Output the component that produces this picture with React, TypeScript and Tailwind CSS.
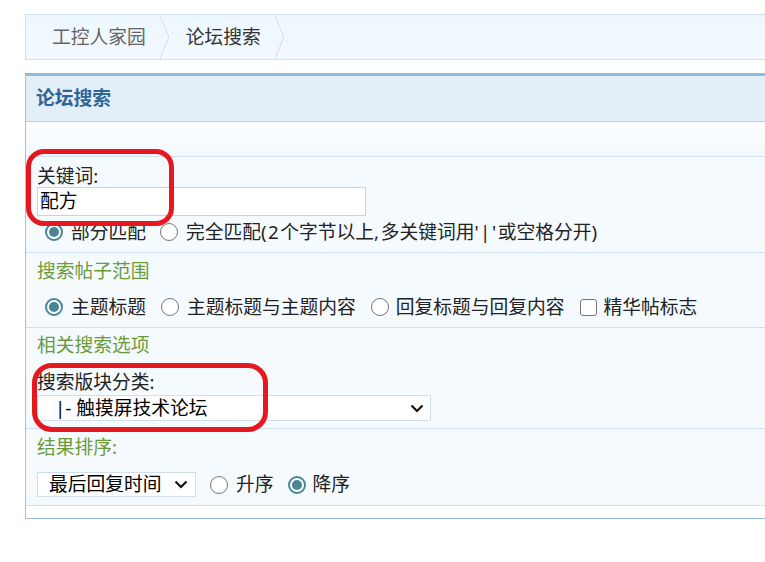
import React from "react";

function Crumb() {
  return (
    <svg width="12" height="44" viewBox="0 0 12 44" className="shrink-0">
      <path d="M1 0 L10 22 L1 44" fill="none" stroke="#d2dadf" strokeWidth="1" />
      <path d="M2.2 0 L11.2 22 L2.2 44" fill="none" stroke="#ffffff" strokeWidth="1" opacity="0.7" />
    </svg>
  );
}

function Chevron() {
  return (
    <svg width="14" height="9" viewBox="0 0 14 9" className="shrink-0">
      <path d="M1.5 1.5 L7 7 L12.5 1.5" fill="none" stroke="#111" strokeWidth="2.2" />
    </svg>
  );
}

function Radio({ checked, ml }: { checked?: boolean; ml: string }) {
  if (checked) {
    return (
      <span
        className={`w-[18px] h-[18px] shrink-0 rounded-full border-[2px] border-[#4a8594] bg-white flex items-center justify-center ${ml}`}
      >
        <span className="w-[10px] h-[10px] rounded-full bg-[#4a8594]" />
      </span>
    );
  }
  return (
    <span
      className={`w-[18px] h-[18px] shrink-0 rounded-full border-[1.5px] border-[#767676] bg-white ${ml}`}
    />
  );
}

const L = "tracking-[1.5px]";

export default function App() {
  return (
    <div className="relative w-[765px] h-[562px] overflow-hidden bg-white text-[#222] text-[18.75px] font-['Noto_Sans','Noto_Sans_CJK_SC',sans-serif]">
      <div className="pt-[14px] pl-[25px]">
        {/* breadcrumb */}
        <div className="w-[780px] h-[46px] border border-[#cfe2ee] bg-gradient-to-b from-[#ecf7fd] to-[#f3f9fd] flex items-center">
          <span className="pl-[26px] pr-[13px] text-[#666] leading-none">工控人家园</span>
          <Crumb />
          <span className="pl-[15px] pr-[13px] text-[#333] leading-none">论坛搜索</span>
          <Crumb />
        </div>

        {/* main box */}
        <div className="mt-[13px] w-[780px] border-t-[3px] border-t-[#8fbcd6] border-l border-b border-l-[#9fc4da] border-b-[#8fbcd6]">
          <div className="h-[46px] bg-[#e3eff8] border-b border-[#b7cfdd] flex items-center pl-[10px] font-bold text-[#2d6599]">
            论坛搜索
          </div>
          <div className="h-[35px] bg-gradient-to-b from-[#fbfdff] to-[#f4f9fe] border-b border-[#cfe0ee]" />

          {/* keyword */}
          <div className="bg-[#f5faff] border-b border-[#cfe0ee] pl-[11px] pt-[8px] pb-[6px]">
            <div className="h-[22px] flex items-center">关键词:</div>
            <div className="w-[329px] h-[29px] border border-[#cbd3d9] bg-white flex items-center pl-[2px] text-black">
              配方
            </div>
            <div className="mt-[2px] h-[28px] flex items-center">
              <Radio checked ml="ml-[8px]" />
              <span className="ml-[8px]">部分匹配</span>
              <Radio ml="ml-[14px]" />
              <span className="ml-[8px]">
                完全匹配<span className={L}>(2</span>个字节以上<span className={L}>,</span>多关键词用<span className={L}>'|'</span>或空格分开<span className={L}>)</span>
              </span>
            </div>
          </div>

          {/* range */}
          <div className="bg-[#f5faff] border-b border-[#cfe0ee] pl-[11px] pt-[6px] pb-[6px]">
            <div className="h-[24px] flex items-center text-[#6b9a38]">搜索帖子范围</div>
            <div className="mt-[10px] h-[28px] flex items-center">
              <Radio checked ml="ml-[8px]" />
              <span className="ml-[8px]">主题标题</span>
              <Radio ml="ml-[15px]" />
              <span className="ml-[8px]">主题标题与主题内容</span>
              <Radio ml="ml-[15px]" />
              <span className="ml-[7px]">回复标题与回复内容</span>
              <span className="ml-[15px] w-[17px] h-[17px] shrink-0 rounded-[3px] border-[1.5px] border-[#767676] bg-white" />
              <span className="ml-[7px]">精华帖标志</span>
            </div>
          </div>

          {/* related options */}
          <div className="bg-[#f5faff] border-b border-[#cfe0ee] pl-[11px] pt-[5px] pb-[7px]">
            <div className="h-[24px] flex items-center text-[#6b9a38]">相关搜索选项</div>
            <div className="mt-[13px] h-[24px] flex items-center">搜索版块分类:</div>
            <div className="mt-[1px] w-[394px] h-[26px] border border-[#cfe0ec] bg-white flex items-center pl-[17px] pr-[6px] text-black">
              <span className="flex-1">|- 触摸屏技术论坛</span>
              <Chevron />
            </div>
          </div>

          {/* sort */}
          <div className="bg-[#f5faff] border-b border-[#cfe0ee] pl-[11px] pt-[6px] pb-[8px]">
            <div className="h-[24px] flex items-center text-[#6b9a38]">结果排序:</div>
            <div className="mt-[13px] h-[25px] flex items-center">
              <div className="w-[159px] h-[25px] border border-[#cfe0ec] bg-white flex items-center pl-[11px] pr-[7px] text-black">
                <span className="flex-1">最后回复时间</span>
                <Chevron />
              </div>
              <Radio ml="ml-[14px]" />
              <span className="ml-[8px]">升序</span>
              <Radio checked ml="ml-[14px]" />
              <span className="ml-[7px]">降序</span>
            </div>
          </div>

          <div className="h-[12px] bg-white" />
        </div>
      </div>

      {/* red annotations */}
      <div className="absolute left-[26px] top-[149px] w-[148px] h-[77px] border-[5px] border-[#e5171f] rounded-[18px]" />
      <div className="absolute left-[32px] top-[363px] w-[236px] h-[69px] border-[5px] border-[#e5171f] rounded-[20px]" />
    </div>
  );
}
